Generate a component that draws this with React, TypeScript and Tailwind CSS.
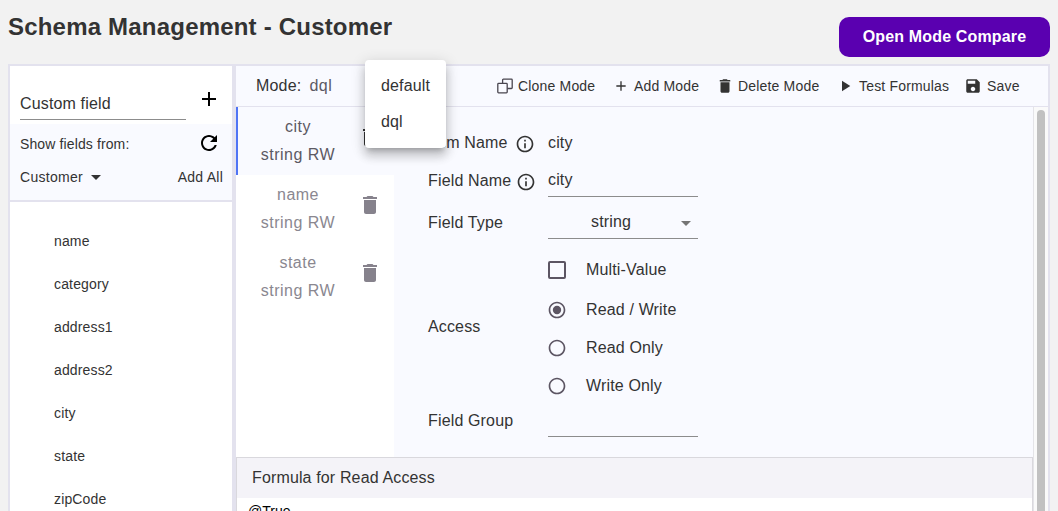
import React from 'react';

type IconProps = { d: string; className?: string };

function Icon({ d, className }: IconProps) {
  return (
    <svg viewBox="0 0 24 24" fill="currentColor" className={className} aria-hidden="true">
      <path d={d} />
    </svg>
  );
}

const paths = {
  add: 'M19 13h-6v6h-2v-6H5v-2h6V5h2v6h6v2z',
  refresh:
    'M17.65 6.35C16.2 4.9 14.21 4 12 4c-4.42 0-7.99 3.58-7.99 8s3.57 8 7.99 8c3.73 0 6.84-2.55 7.73-6h-2.08c-.82 2.33-3.04 4-5.65 4-3.31 0-6-2.69-6-6s2.69-6 6-6c1.66 0 3.14.69 4.22 1.78L13 11h7V4l-2.35 2.35z',
  drop: 'M7 10l5 5 5-5z',
  trash: 'M6 19c0 1.1.9 2 2 2h8c1.1 0 2-.9 2-2V7H6v12zM19 4h-3.5l-1-1h-5l-1 1H5v2h14V4z',
  play: 'M8 5v14l11-7z',
  save: 'M17 3H5c-1.11 0-2 .9-2 2v14c0 1.1.89 2 2 2h14c1.1 0 2-.9 2-2V7l-4-4zm-5 16c-1.66 0-3-1.34-3-3s1.34-3 3-3 3 1.34 3 3-1.34 3-3 3zm3-10H5V5h10v4z',
  info: 'M11 7h2v2h-2zm0 4h2v6h-2zm1-9C6.48 2 2 6.48 2 12s4.48 10 10 10 10-4.48 10-10S17.52 2 12 2zm0 18c-4.41 0-8-3.59-8-8s3.59-8 8-8 8 3.59 8 8-3.59 8-8 8z',
  radio: 'M12 2C6.48 2 2 6.48 2 12s4.48 10 10 10 10-4.48 10-10S17.52 2 12 2zm0 18c-4.42 0-8-3.58-8-8s3.58-8 8-8 8 3.58 8 8-3.58 8-8 8z',
  radioDot: 'M12 7a5 5 0 1 0 0 10a5 5 0 1 0 0-10z',
};

function CloneIcon() {
  return (
    <svg viewBox="0 0 16 16" fill="none" stroke="#49454f" strokeWidth="1.3" className="size-4">
      <rect x="0.8" y="5.4" width="9.4" height="9.4" rx="0.8" />
      <path d="M5.6 5.2V2q0-.8.8-.8h8q.8 0 .8.8v7.7q0 .8-.8.8h-4" />
    </svg>
  );
}

const sourceFields = ['name', 'category', 'address1', 'address2', 'city', 'state', 'zipCode'];

function Sidebar() {
  return (
    <aside className="flex h-[460px] w-[226px] shrink-0 flex-col border-x-2 border-t-2 border-[#e3e2ee] bg-white text-sm tracking-[0.15px]">
      <div className="flex h-[58px] shrink-0 items-start pl-2.5">
        <div className="flex h-[54px] w-[166px] items-end border-b border-[#8c8c8c] pb-[3px] text-base leading-6 tracking-[0.15px]">
          Custom field
        </div>
        <Icon d={paths.add} className="mt-[21px] ml-[11px] size-6 text-black" />
      </div>
      <div className="h-[78px] shrink-0 border-b-2 border-[#e3e2ee] bg-[#f9faff] pl-2.5">
        <div className="flex h-10 items-center">
          <span className="w-[177px] tracking-[0.12px]">Show fields from:</span>
          <Icon d={paths.refresh} className="-mt-[3px] size-6 text-black" />
        </div>
        <div className="flex h-[26px] items-center justify-between pr-[9px]">
          <span className="flex items-center tracking-[0.3px]">
            Customer
            <Icon d={paths.drop} className="ml-px size-6" />
          </span>
          <span className="tracking-[0.25px]">Add All</span>
        </div>
      </div>
      <ul className="min-h-0 overflow-hidden pt-[17px] pl-11">
        {sourceFields.map((f) => (
          <li key={f} className="flex h-[43px] items-center">{f}</li>
        ))}
      </ul>
    </aside>
  );
}

function Toolbar() {
  return (
    <div className="flex h-[41px] shrink-0 items-center border-b border-[#e3e2ee] text-sm tracking-[0.18px]">
      <div className="ml-5 flex w-[241px] gap-2 text-base leading-6">
        <span>Mode:</span>
        <span className="tracking-[0.5px] text-[#5c5963]">dql</span>
      </div>
      <button className="flex w-[116px] items-center gap-[5px]"><CloneIcon />Clone Mode</button>
      <button className="flex w-[103px] items-center gap-[5px]"><Icon d={paths.add} className="size-[16px]" /><span>Add Mode</span></button>
      <button className="flex w-[120px] items-center gap-1"><Icon d={paths.trash} className="size-[18px]" />Delete Mode</button>
      <button className="flex w-[128px] items-center gap-[5px]"><Icon d={paths.play} className="size-[18px]" /><span>Test Formulas</span></button>
      <button className="flex items-center gap-[5px]"><Icon d={paths.save} className="size-[18px]" />Save</button>
    </div>
  );
}

const fields = ['city', 'name', 'state'];

function FieldList() {
  return (
    <div className="w-[158px] shrink-0 bg-white tracking-[0.5px]">
      {fields.map((name, i) => (
        <div
          key={name}
          className={
            i === 0
              ? 'flex h-[68px] items-center border-l-2 border-[#4f74f5] bg-[#f9faff] text-[#5c5963]'
              : 'flex h-[68px] items-center border-l-2 border-white text-[#8a8790]'
          }
        >
          <div className="w-[120px] text-center leading-7">
            <div>{name}</div>
            <div>string RW</div>
          </div>
          <Icon d={paths.trash} className={i === 0 ? '-mt-2 size-6 text-[#333333]' : '-mt-2 size-6 text-[#86828c]'} />
        </div>
      ))}
    </div>
  );
}

function InfoLabel({ text, gap }: { text: string; gap: string }) {
  return (
    <div className="flex w-[120px] items-center">
      {text}
      <Icon d={paths.info} className={gap} />
    </div>
  );
}

function Radio({ label, checked }: { label: string; checked?: boolean }) {
  return (
    <label className="flex h-[38px] items-center">
      <svg viewBox="0 0 24 24" className="-ml-px mr-[19px] size-5 fill-[#5c5563]" aria-hidden="true">
        <path d={paths.radio} />
        {checked && <path d={paths.radioDot} />}
      </svg>
      {label}
    </label>
  );
}

function FieldForm() {
  return (
    <div className="flex-1 pt-[17px] pl-[34px] tracking-[0.15px]">
      <div className="flex h-[38px] items-center">
        <InfoLabel text="Item Name" gap="mt-[2px] ml-[7px] size-5" />
        <span>city</span>
      </div>
      <div className="flex h-[38px] items-center">
        <InfoLabel text="Field Name" gap="mt-[2px] ml-[5px] size-5" />
        <div className="-mt-1.5 flex h-[38px] w-[150px] items-center border-b border-[#8c8c8c] pt-[5px]">city</div>
      </div>
      <div className="flex h-[45px] items-center">
        <span className="w-[120px]">Field Type</span>
        <div className="flex h-[33px] w-[150px] items-center border-b border-[#8c8c8c]">
          <span className="w-[126px] text-center">string</span>
          <Icon d={paths.drop} className="mt-[2px] size-6 text-[#757575]" />
        </div>
      </div>
      <div className="flex items-center">
        <span className="w-[120px] pt-1">Access</span>
        <div className="pt-[5px]">
          <label className="mb-[1px] flex h-[40px] items-center">
            <span className="mr-5 size-[18px] rounded-[2px] border-2 border-[#5c5563]" />
            Multi-Value
          </label>
          <Radio label="Read / Write" checked />
          <Radio label="Read Only" />
          <Radio label="Write Only" />
        </div>
      </div>
      <div className="-mt-0.5 flex h-9 items-center">
        <span className="w-[120px]">Field Group</span>
        <div className="-mt-0.5 h-[34px] w-[150px] border-b border-[#8c8c8c]" />
      </div>
    </div>
  );
}

function ModeMenu() {
  return (
    <div className="absolute top-[60px] left-[365px] h-[88px] w-[81px] rounded-[4px] bg-white py-2 pl-4 leading-9 tracking-[0.15px] shadow-[0_5px_5px_-3px_rgba(0,0,0,0.2),0_8px_10px_1px_rgba(0,0,0,0.14),0_3px_14px_2px_rgba(0,0,0,0.12)]">
      <div>default</div>
      <div>dql</div>
    </div>
  );
}

export default function App() {
  return (
    <div className="relative h-[511px] w-[1058px] overflow-hidden bg-[#f2f2f2] font-['Liberation_Sans',Arial,sans-serif] text-base text-[#333333]">
      <header className="flex h-16 justify-between pr-2 pl-2">
        <h1 className="pt-[9px] text-2xl leading-9 font-bold tracking-[0.2px]">Schema Management - Customer</h1>
        <button className="mt-[17px] h-10 w-[211px] rounded-[10px] bg-[#5a00b0] font-bold tracking-[0.15px] text-white">
          Open Mode Compare
        </button>
      </header>
      <div className="flex pl-2">
        <Sidebar />
        <main className="flex h-[447px] w-[816px] flex-col border-t-2 border-r-2 border-l-2 border-[#e3e2ee] bg-[#f9faff]">
          <Toolbar />
          <div className="flex min-h-0 flex-1">
            <div className="flex w-[797px] flex-col">
              <div className="flex h-[350px] shrink-0">
                <FieldList />
                <FieldForm />
              </div>
              <section className="flex-1 border-t border-r border-l border-[#d9d8dd] bg-white">
                <div className="flex h-10 items-center bg-[#f4f3f8] pl-[15px] tracking-[0.14px]">Formula for Read Access</div>
                <div className="h-[13px] overflow-hidden pt-[5px] pl-[11px] text-sm leading-4 text-black">@True</div>
              </section>
            </div>
            <div className="flex flex-1 justify-center border-l border-[#e4e4e8] bg-[#fafafa] pt-[3px]">
              <div className="w-2 rounded-t-full bg-[#c1c1c1]" />
            </div>
          </div>
        </main>
      </div>
      <ModeMenu />
    </div>
  );
}
